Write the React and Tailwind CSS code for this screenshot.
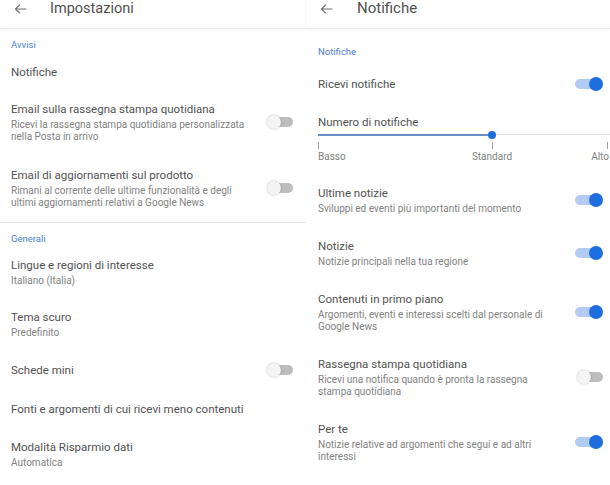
import React from "react"

const Arrow = () => (
  <svg width="13" height="10" viewBox="0 0 13 10" fill="none" stroke="#707070" strokeWidth="1.1" strokeLinecap="round" strokeLinejoin="round">
    <path d="M12 5H1.5M5.5 1L1.5 5l4 4" />
  </svg>
)

const Toggle = ({ on }) =>
  on ? (
    <div className="relative w-[28px] h-[14px] shrink-0">
      <div className="absolute left-0 right-[4px] top-[2px] h-[10px] rounded-full bg-[#b3cbf2]" />
      <div className="absolute right-0 top-0 w-[14px] h-[14px] rounded-full bg-[#1d6fe0]" />
    </div>
  ) : (
    <div className="relative w-[26px] h-[14px] shrink-0">
      <div className="absolute left-[4px] right-0 top-[2px] h-[10px] rounded-full bg-[#bdbdbd]" />
      <div className="absolute left-0 top-0 w-[14px] h-[14px] rounded-full bg-[#f4f4f4] shadow-[0_0_2px_rgba(0,0,0,0.3)]" />
    </div>
  )

const Header = ({ title, arrowPad, titlePad, size }) => (
  <div className="h-[29px] border-b border-[#ededed] shadow-[0_1px_2px_rgba(0,0,0,0.05)] flex items-start">
    <div className={`${arrowPad} pt-[4px]`}>
      <Arrow />
    </div>
    <div className={`${titlePad} ${size} leading-[17px] text-[#505050]`}>{title}</div>
  </div>
)

const Label = ({ children, className }) => (
  <div className={`text-[9.5px] leading-[12px] text-[#4d80d6] ${className}`}>{children}</div>
)

const Item = ({ title, sub, toggle, className = "" }) => (
  <div className={`flex items-center justify-between ${className}`}>
    <div>
      <div className="text-[11.5px] leading-[16px] text-[#525252]">{title}</div>
      {sub && (
        <div className="mt-[2px] text-[10px] leading-[12px] text-[#828282]">
          {sub.map((l) => (
            <div key={l}>{l}</div>
          ))}
        </div>
      )}
    </div>
    {toggle}
  </div>
)

function Impostazioni() {
  return (
    <div className="w-[306px] shrink-0">
      <Header title="Impostazioni" arrowPad="pl-[14px]" titlePad="pl-[23px]" size="text-[14.5px]" />
      <div className="pl-[11px] pr-[13px]">
        <Label className="mt-[10px]">Avvisi</Label>
        <Item className="mt-[13px]" title="Notifiche" />
        <Item
          className="mt-[21px]"
          title="Email sulla rassegna stampa quotidiana"
          sub={["Ricevi la rassegna stampa quotidiana personalizzata", "nella Posta in arrivo"]}
          toggle={<Toggle />}
        />
        <Item
          className="mt-[24px]"
          title="Email di aggiornamenti sul prodotto"
          sub={["Rimani al corrente delle ultime funzionalità e degli", "ultimi aggiornamenti relativi a Google News"]}
          toggle={<Toggle />}
        />
      </div>
      <div className="mt-[13px] h-px bg-[#e8e8e8]" />
      <div className="pl-[11px] pr-[13px]">
        <Label className="mt-[10px]">Generali</Label>
        <Item className="mt-[12px]" title="Lingue e regioni di interesse" sub={["Italiano (Italia)"]} />
        <Item className="mt-[22px]" title="Tema scuro" sub={["Predefinito"]} />
        <Item className="mt-[23px]" title="Schede mini" toggle={<Toggle />} />
        <Item className="mt-[23px]" title="Fonti e argomenti di cui ricevi meno contenuti" />
        <Item className="mt-[22px]" title="Modalità Risparmio dati" sub={["Automatica"]} />
      </div>
    </div>
  )
}

function Slider() {
  return (
    <div className="mr-[-7px]">
      <div className="relative h-[10px]">
        <div className="absolute left-0 top-[4px] w-[174px] h-[2px] bg-[#6a8fc6]" />
        <div className="absolute left-[174px] right-0 top-[4px] h-px bg-[#e2e2e2]" />
        <div className="absolute left-[170px] top-[1px] w-[8px] h-[8px] rounded-full bg-[#1d6fe0]" />
      </div>
      <div className="relative h-[7px] mt-[2px]">
        <div className="absolute left-0 top-0 w-px h-[7px] bg-[#a0a0a0]" />
        <div className="absolute left-[174px] top-0 w-px h-[7px] bg-[#a0a0a0]" />
        <div className="absolute right-[2px] top-0 w-px h-[7px] bg-[#a0a0a0]" />
      </div>
      <div className="relative h-[12px] mt-[2px] text-[10px] leading-[12px] text-[#828282]">
        <span className="absolute left-0">Basso</span>
        <span className="absolute left-[174px] -translate-x-1/2">Standard</span>
        <span className="absolute right-[1px]">Alto</span>
      </div>
    </div>
  )
}

function Notifiche() {
  return (
    <div className="w-[304px] shrink-0">
      <Header title="Notifiche" arrowPad="pl-[14px]" titlePad="pl-[24px]" size="text-[15px]" />
      <div className="pl-[12px] pr-[7px]">
        <Label className="mt-[17px]">Notifiche</Label>
        <Item className="mt-[18px]" title="Ricevi notifiche" toggle={<Toggle on />} />
        <Item className="mt-[22px]" title="Numero di notifiche" />
        <Slider />
        <Item
          className="mt-[22px]"
          title="Ultime notizie"
          sub={["Sviluppi ed eventi più importanti del momento"]}
          toggle={<Toggle on />}
        />
        <Item
          className="mt-[23px]"
          title="Notizie"
          sub={["Notizie principali nella tua regione"]}
          toggle={<Toggle on />}
        />
        <Item
          className="mt-[23px]"
          title="Contenuti in primo piano"
          sub={["Argomenti, eventi e interessi scelti dal personale di", "Google News"]}
          toggle={<Toggle on />}
        />
        <Item
          className="mt-[23px]"
          title="Rassegna stampa quotidiana"
          sub={["Ricevi una notifica quando è pronta la rassegna", "stampa quotidiana"]}
          toggle={<Toggle />}
        />
        <Item
          className="mt-[23px]"
          title="Per te"
          sub={["Notizie relative ad argomenti che segui e ad altri", "interessi"]}
          toggle={<Toggle on />}
        />
      </div>
    </div>
  )
}

export default function App() {
  return (
    <div className="w-[610px] h-[485px] overflow-hidden bg-white flex font-['Roboto',sans-serif]">
      <Impostazioni />
      <Notifiche />
    </div>
  )
}
